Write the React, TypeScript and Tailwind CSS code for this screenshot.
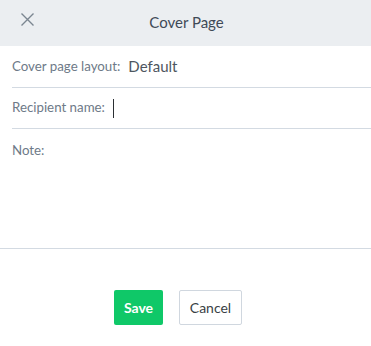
import React from 'react';

export default function App() {
    return (
        <div className="w-[371px] h-[346px] bg-white flex flex-col" style={{ fontFamily: 'Lato, "Noto Sans", sans-serif' }}>
            <header className="relative h-[46px] bg-[#ebeef1] flex items-center justify-center shrink-0">
                <button className="absolute left-[21px] top-[13px] text-[#7b8691]">
                    <svg width="13" height="13" viewBox="0 0 13 13" fill="none" stroke="currentColor" strokeWidth="1.4">
                        <path d="M0.5 0.5 L12.5 12.5 M12.5 0.5 L0.5 12.5" />
                    </svg>
                </button>
                <h1 className="text-[15px] text-[#3f4a57] ml-[2px] mt-[-1px]">Cover Page</h1>
            </header>

            <div className="pl-3">
                <div className="h-[42px] flex items-center border-b border-[#d3dae2]">
                    <span className="text-[13.3px] text-[#6e7a88]">Cover page layout:</span>
                    <span className="ml-[8px] text-[15px] text-[#4e5660]">Default</span>
                </div>
                <div className="h-[41px] flex items-center border-b border-[#d3dae2]">
                    <span className="text-[13.3px] text-[#6e7a88]">Recipient name:</span>
                    <span className="ml-[8px] w-[1px] h-[19px] bg-[#2b2f33]" />
                </div>
            </div>
            <div className="h-[120px] border-b border-[#d3dae2] pl-3 pt-[8px]">
                <span className="text-[13.3px] text-[#6e7a88]">Note:</span>
            </div>

            <div className="flex justify-center gap-[16px] pt-[41px] pr-[15px]">
                <button className="w-[49px] h-[35px] rounded-[2px] bg-[#0fc868] text-white text-[14px] font-bold">Save</button>
                <button className="w-[63px] h-[35px] rounded-[2px] bg-white border border-[#d0d7df] text-[#3a3f45] text-[14px]">Cancel</button>
            </div>
        </div>
    );
}
